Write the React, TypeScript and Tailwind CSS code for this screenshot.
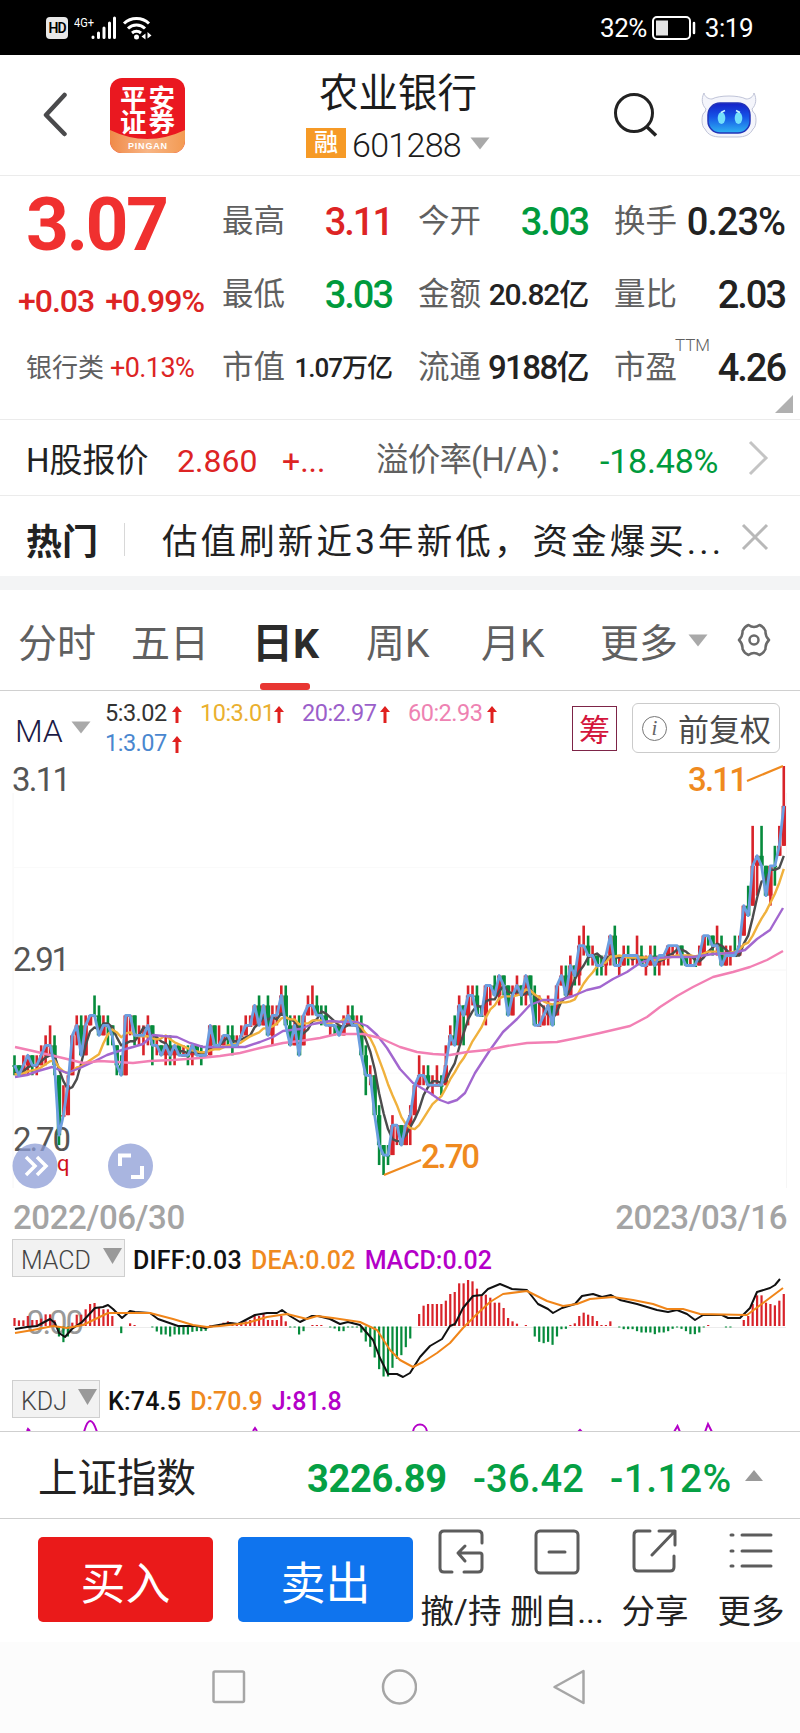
import React from "react";

// [high, low, close] in cents, one entry per trading day
const DAYS: number[][] = [
  [282, 280, 281], [281, 280, 280], [282, 280, 281], [282, 280, 282], [282, 280, 281], [282, 280, 281],
  [283, 281, 282], [284, 281, 283], [285, 282, 283], [284, 280, 281], [280, 273, 274], [279, 276, 276],
  [280, 276, 279], [284, 280, 284], [286, 283, 285], [286, 282, 282], [286, 282, 285], [286, 285, 286],
  [288, 286, 286], [287, 284, 284], [286, 284, 285], [286, 283, 285], [285, 283, 284], [283, 280, 281],
  [282, 280, 280], [286, 280, 286], [286, 284, 286], [286, 283, 284], [285, 283, 284], [285, 282, 284],
  [286, 283, 285], [285, 281, 283], [284, 282, 283], [283, 282, 282], [284, 281, 283], [284, 281, 282],
  [283, 281, 283], [283, 282, 282], [283, 282, 282], [283, 281, 282], [283, 281, 283], [283, 282, 282],
  [283, 281, 282], [282, 282, 282], [285, 282, 285], [285, 283, 283], [285, 283, 283], [284, 283, 284],
  [285, 283, 284], [285, 282, 283], [284, 283, 283], [285, 284, 284], [286, 284, 285], [286, 285, 285],
  [287, 285, 287], [288, 285, 285], [287, 285, 287], [288, 284, 284], [287, 283, 286], [287, 285, 286],
  [289, 286, 288], [289, 285, 285], [286, 283, 283], [286, 283, 285], [286, 282, 282], [286, 283, 286],
  [288, 286, 287], [289, 286, 287], [288, 286, 286], [287, 285, 286], [287, 285, 285], [285, 284, 285],
  [285, 284, 285], [285, 284, 284], [286, 284, 285], [287, 285, 286], [287, 285, 285], [286, 285, 285],
  [286, 282, 282], [283, 278, 280], [281, 279, 280], [280, 276, 276], [277, 271, 273], [273, 270, 272],
  [273, 271, 272], [276, 272, 275], [275, 273, 275], [275, 273, 273], [275, 273, 275], [277, 273, 276],
  [279, 276, 279], [282, 279, 280], [281, 279, 280], [281, 279, 279], [280, 278, 279], [281, 279, 279],
  [280, 278, 279], [283, 279, 281], [285, 283, 284], [286, 283, 283], [288, 283, 287], [287, 283, 286],
  [289, 285, 288], [289, 287, 288], [289, 286, 286], [287, 286, 286], [289, 285, 289], [289, 287, 289],
  [290, 288, 288], [290, 287, 290], [290, 288, 289], [289, 286, 286], [289, 286, 288], [290, 288, 289],
  [289, 287, 288], [290, 287, 290], [290, 288, 288], [289, 285, 285], [288, 285, 285], [287, 285, 286],
  [288, 285, 287], [287, 285, 285], [289, 286, 289], [291, 289, 290], [291, 288, 288], [292, 288, 291],
  [291, 289, 290], [294, 289, 293], [295, 292, 293], [294, 291, 292], [293, 291, 292], [292, 290, 291],
  [292, 290, 291], [292, 290, 292], [294, 291, 294], [295, 291, 291], [292, 290, 291], [293, 291, 292],
  [293, 291, 292], [292, 291, 292], [294, 291, 292], [293, 291, 291], [292, 290, 291], [293, 291, 292],
  [293, 290, 291], [292, 290, 292], [292, 291, 292], [293, 291, 293], [293, 292, 293], [293, 292, 293],
  [293, 291, 292], [292, 291, 291], [292, 291, 291], [292, 291, 291], [293, 291, 292], [294, 292, 294],
  [294, 293, 294], [294, 292, 293], [295, 292, 293], [294, 292, 291], [293, 291, 292], [293, 291, 292],
  [294, 292, 292], [294, 292, 293], [297, 294, 297], [299, 296, 296], [305, 297, 301], [302, 298, 302],
  [305, 301, 301], [301, 298, 298], [301, 297, 301], [303, 299, 301], [305, 302, 303], [311, 303, 307],
];

const MACD = [
  24, 17, 17, 30, 18, 18, 22, 35, 35, 17, -30, -47, -30, 10, 34, 34, 50, 66, 69, 55, 50, 50, 30, 0, -20, 0, 8, 3, 0,
  0, 0, -3, -15, -24, -24, -30, -24, -24, -24, -24, -16, -14, -14, -13, 2, 2, 4, 10, 14, 10, 8, 10, 14, 18, 34, 30,
  36, 18, 18, 18, 30, 14, -3, -3, -24, -14, 0, 3, 3, 3, 0, -3, -6, -14, -14, -3, -3, -3, -18, -45, -61, -93, -128,
  -150, -150, -124, -97, -86, -62, -36, 0, 36, 61, 66, 66, 66, 66, 76, 96, 102, 128, 128, 138, 134, 112, 92, 94, 85,
  70, 70, 54, 24, 14, 7, 0, 3, 0, -30, -46, -50, -46, -55, -30, -8, -7, 3, 8, 30, 40, 34, 30, 15, 3, 3, 14, 0, -3,
  -8, -8, -8, -14, -18, -18, -18, -23, -18, -18, -14, -7, -3, -7, -14, -23, -23, -18, -3, 3, 0, 0, 0, -3, -3, 0, 0,
  18, 30, 66, 92, 92, 70, 66, 62, 76, 96,
];

const MA20 =
  "15,1077 27,1075 38,1071 52,1067 67,1073 80,1068 93,1062 107,1055 122,1050 133,1047 143,1044 153,1035 163,1036 177,1037 190,1043 203,1047 217,1047 230,1047 245,1047 260,1042 273,1037 283,1031 300,1029 313,1024 330,1021 343,1022 357,1022 367,1026 377,1035 387,1048 400,1069 413,1083 430,1093 440,1100 448,1103 457,1100 465,1093 475,1073 490,1050 503,1032 517,1019 530,1005 543,1000 560,1000 573,996 587,990 600,987 613,979 627,972 640,963 653,958 673,957 693,957 713,954 733,953 745,950 757,939 770,930 783,908";
const MA60 =
  "15,1047 33,1051 50,1055 67,1059 83,1063 100,1061 117,1062 133,1063 150,1061 173,1060 200,1058 220,1056 240,1053 260,1048 283,1043 300,1041 320,1038 337,1034 363,1034 380,1038 400,1047 417,1052 433,1054 450,1055 467,1052 487,1050 507,1046 527,1043 557,1042 577,1038 600,1033 630,1026 647,1017 660,1007 677,996 693,987 713,977 733,972 750,967 767,960 783,951";
const DIFF =
  "15,1329 27,1327 37,1326 50,1319 55,1323 59,1333 65,1337 72,1329 82,1322 95,1308 103,1307 108,1305 113,1309 122,1318 130,1311 135,1312 150,1313 158,1319 178,1326 197,1326 205,1328 213,1326 230,1323 238,1324 255,1315 267,1313 277,1313 282,1310 290,1316 300,1322 312,1316 318,1316 330,1319 340,1324 348,1322 360,1325 373,1340 380,1358 388,1374 397,1374 403,1377 410,1373 420,1357 430,1346 442,1339 450,1326 455,1324 463,1308 473,1296 482,1295 488,1289 500,1284 512,1289 527,1290 538,1304 548,1309 553,1313 562,1308 575,1304 582,1296 593,1294 602,1297 611,1295 620,1300 637,1304 657,1310 668,1312 677,1310 687,1314 695,1320 703,1315 722,1315 728,1318 740,1318 750,1308 757,1292 770,1288 775,1285 780,1279";
const DEA =
  "15,1333 33,1330 53,1326 67,1328 83,1325 108,1313 150,1313 173,1319 193,1325 207,1327 220,1326 247,1323 267,1317 287,1314 307,1319 317,1316 333,1318 360,1322 377,1330 390,1350 400,1360 413,1367 423,1362 437,1353 450,1343 463,1328 477,1314 490,1302 503,1294 527,1291 547,1301 563,1306 577,1304 590,1299 613,1297 633,1300 653,1304 667,1309 683,1309 700,1314 747,1315 763,1303 783,1288";

const RED = "#d8232a";
const GREEN = "#068b3c";

const dayX = (i: number) => 14.5 + i * 4.4467;
const priceY = (p: number) => 766 + (311 - p) * 9.976;

function average(n: number) {
  return DAYS.map((_, i) => {
    let sum = 0;
    for (let k = i - n + 1; k <= i; k++) sum += k < 0 ? 280 : DAYS[k][2];
    return `${dayX(i).toFixed(1)},${priceY(sum / n).toFixed(1)}`;
  }).join(" ");
}

function Candles() {
  return (
    <g>
      {DAYS.map(([high, low, close], i) => {
        const prev = i ? DAYS[i - 1][2] : 281;
        const up = close > prev || (close === prev && i % 3 !== 0);
        const open = Math.min(high, Math.max(low, prev));
        const top = priceY(Math.max(open, close));
        const color = up ? RED : GREEN;
        return (
          <g key={i} fill={color}>
            <rect x={dayX(i) - 1.3} y={priceY(high)} width="2.6" height={priceY(low) - priceY(high)} />
            <rect x={dayX(i) - 2.2} y={top} width="4.4" height={Math.max(1.5, priceY(Math.min(open, close)) - top)} />
          </g>
        );
      })}
    </g>
  );
}

function PriceChart() {
  return (
    <svg className="block h-[438px] w-full" viewBox="0 757 800 438" fill="none">
      <path d="M13 793V1188M786.500 793V1188M13 970H786" stroke="#f6f6f6" />
      <path d="M13 867.500H786M13 1073H786" stroke="#fafafa" />
      <g fill="#555" fontSize="33" fontFamily="Roboto, sans-serif">
        <text x="12" y="791" textLength="59">3.11</text>
        <text x="13" y="971" textLength="57">2.91</text>
        <text x="13" y="1151" textLength="58">2.70</text>
      </g>
      <Candles />
      <g strokeWidth="2.4" strokeLinejoin="round">
        <polyline points={average(5)} stroke="#4c4c4c" />
        <polyline points={average(10)} stroke="#f0b13c" />
        <polyline points={MA20} stroke="#a267cf" />
        <polyline points={MA60} stroke="#f280b4" />
        <polyline points={average(1)} stroke="#6c9ee0" strokeWidth="2.800" />
      </g>
      <g fill="#ef8a1f" fontSize="33" fontWeight="500" fontFamily="Roboto, sans-serif">
        <text x="688" y="791" textLength="60">3.11</text>
        <text x="421" y="1168" textLength="59">2.70</text>
      </g>
      <path d="M747 781L783 766M384 1175L421 1160" stroke="#ef8a1f" strokeWidth="2.200" />
      <circle cx="35" cy="1166" r="22.500" fill="#8c9cd6" fillOpacity=".75" />
      <path d="M26 1157L35 1166L26 1175M37 1157L46 1166L37 1175" stroke="#fff" strokeWidth="3.500" />
      <text x="57" y="1171" fill="#d0111b" fontSize="22" fontFamily="Roboto, sans-serif">q</text>
      <circle cx="130.500" cy="1166" r="22.500" fill="#a9b5e0" />
      <path d="M120 1166V1155.500H131M142 1166V1177H131" stroke="#fff" strokeWidth="4" />
    </svg>
  );
}

function MacdChart() {
  return (
    <svg className="block h-[103px] w-full" viewBox="0 1277 800 103" fill="none">
      <path d="M13 1327.500H786" stroke="#ececec" />
      <text x="26" y="1334" fill="#999" fontSize="33" fontFamily="Roboto, sans-serif" textLength="58">0.00</text>
      {MACD.map((v, i) =>
        v === 0 ? null : (
          <rect
            key={i}
            x={dayX(i) - 1.1}
            y={v > 0 ? 1326 - v / 3 : 1326.5}
            width="2.2"
            height={Math.abs(v) / 3}
            fill={v > 0 ? RED : GREEN}
          />
        )
      )}
      <polyline points={DIFF} stroke="#111" strokeWidth="2" strokeLinejoin="round" />
      <polyline points={DEA} stroke="#f08519" strokeWidth="2" strokeLinejoin="round" />
    </svg>
  );
}

function StatusBar() {
  return (
    <div className="flex h-[55px] shrink-0 items-center justify-between bg-black pr-[47px] pl-[46px] text-white">
      <div className="flex h-6 items-center">
        <div className="flex h-[22px] w-[22px] items-center justify-center rounded-[4px] bg-[#e8e8e8] text-[14px] leading-none font-semibold tracking-[-1px] text-black">
          HD
        </div>
        <svg className="ml-[6px] block" width="78" height="26" viewBox="0 0 78 26" fill="none">
          <text x="0" y="12" fill="#fff" fontSize="13.500" fontFamily="Roboto, sans-serif" textLength="20" lengthAdjust="spacingAndGlyphs">4G+</text>
          <path d="M19 22.500V22M24.500 22.500V18M30 22.500V13M35.500 22.500V8M40.500 22.500V3" stroke="#fff" strokeWidth="3" strokeLinecap="round" />
          <path d="M50 8.500a18 18 0 0 1 25 0M54 13.500a12 12 0 0 1 17 0M58 18a7 7 0 0 1 9 0" stroke="#fff" strokeWidth="3" />
          <circle cx="62.500" cy="22" r="2.500" fill="#fff" />
          <path d="M67.500 21.500L71.500 18.500V24.500ZM77.500 20.500L73.500 17V23.500Z" fill="#fff" />
        </svg>
      </div>
      <div className="flex items-center text-[26px] leading-none tracking-[-0.5px]">
        <span>32%</span>
        <svg className="mx-[4px] block" width="46" height="26" viewBox="0 0 46 26" fill="none">
          <rect x="2" y="2" width="37" height="22" rx="4" stroke="#fff" strokeWidth="2" />
          <rect x="5" y="5.500" width="12" height="15" fill="#e4e4e4" />
          <path d="M43 8V18" stroke="#fff" strokeWidth="2.500" strokeLinecap="round" />
        </svg>
        <span className="ml-[4px]">3:19</span>
      </div>
    </div>
  );
}

function Caret({ className = "", fill = "#a9a9a9" }: { className?: string; fill?: string }) {
  return (
    <svg className={`block shrink-0 ${className}`} width="20" height="13" viewBox="0 0 20 13">
      <path d="M0.500 0.500H19.500L10 12.500Z" fill={fill} />
    </svg>
  );
}

function BrokerLogo() {
  return (
    <svg className="block" width="75" height="75" viewBox="0 0 75 75">
      <defs>
        <clipPath id="logoShape">
          <rect width="75" height="75" rx="12" />
        </clipPath>
        <linearGradient id="logoBand" x1="0" y1="0" x2="1" y2="0">
          <stop offset="0" stopColor="#f08a48" />
          <stop offset=".5" stopColor="#f8b585" />
          <stop offset="1" stopColor="#f39a52" />
        </linearGradient>
      </defs>
      <g clipPath="url(#logoShape)">
        <rect width="75" height="75" fill="#ea1820" />
        <path d="M0 52Q37 70 75 52V75H0Z" fill="url(#logoBand)" />
      </g>
      <g fill="#fff" textAnchor="middle">
        <text x="37.500" y="30" fontSize="26.500" fontWeight="700" fontFamily="'Noto Sans CJK SC', sans-serif" textLength="55">平安</text>
        <text x="37.500" y="54" fontSize="26.500" fontWeight="700" fontFamily="'Noto Sans CJK SC', sans-serif" textLength="55">证券</text>
        <text x="37.500" y="71" fontSize="9" fontWeight="700" fontFamily="'Liberation Sans', sans-serif" textLength="39">PINGAN</text>
      </g>
    </svg>
  );
}

function Robot() {
  return (
    <svg className="block" width="56" height="46" viewBox="0 0 56 46">
      <defs>
        <linearGradient id="visor" x1="0" y1="0" x2="0" y2="1">
          <stop offset="0" stopColor="#1420c8" />
          <stop offset=".45" stopColor="#1553e6" />
          <stop offset="1" stopColor="#2fb4f2" />
        </linearGradient>
      </defs>
      <path
        d="M3 1C0 7 1 13 5 17L4 20C0 21 0 35 4 37C7 43 12 45 20 45H36C44 45 49 43 52 37C56 35 56 21 52 20L51 17C55 13 56 7 53 1C52 5 49 7 45 7C38 3 18 3 11 7C7 7 4 5 3 1Z"
        fill="#f4f5fb"
        stroke="#c0c4d8"
      />
      <rect x="7" y="11" width="42" height="30" rx="12" fill="url(#visor)" stroke="#2233b8" strokeWidth="1.500" />
      <ellipse cx="20.500" cy="26" rx="3.800" ry="6" fill="#74e0fb" />
      <ellipse cx="37.500" cy="26" rx="3.800" ry="6" fill="#74e0fb" />
      <path d="M20 20.500L24 18.500M35 18.500L39 20.500" stroke="#c8f3ff" strokeWidth="1.500" />
    </svg>
  );
}

function Header() {
  return (
    <div className="flex h-[121px] shrink-0 items-center border-b border-[#ebebeb] pl-[43px] text-[#1c1c1c]">
      <svg className="block" width="26" height="46" viewBox="0 0 26 46" fill="none">
        <path d="M21.500 3L3 23L21.500 42" stroke="#4a4a4c" strokeWidth="4.500" strokeLinecap="round" strokeLinejoin="round" />
      </svg>
      <div className="ml-[41px]">
        <BrokerLogo />
      </div>
      <div className="ml-[98px] flex w-[230px] flex-col items-center pt-[10px]">
        <div className="text-[39.5px] leading-[46px]">农业银行</div>
        <div className="flex h-[52px] items-center">
          <div className="flex h-[30px] w-[40px] items-center justify-center bg-[#f69a26] pb-px text-[24px] leading-none font-medium text-white">融</div>
          <span className="mt-[4px] ml-[6px] text-[34px] leading-none font-light tracking-[-0.7px]">601288</span>
          <Caret className="ml-[9px]" />
        </div>
      </div>
      <svg className="ml-[100px] block" width="46" height="46" viewBox="0 0 46 46" fill="none">
        <circle cx="21" cy="21" r="18.500" stroke="#222" strokeWidth="3" />
        <path d="M33 34L43 43.500" stroke="#222" strokeWidth="3.500" />
      </svg>
      <div className="ml-[42px]">
        <Robot />
      </div>
    </div>
  );
}

function Stat({ label, value, className }: { label: React.ReactNode; value: string; className: string }) {
  return (
    <div className="flex h-[73px] items-center justify-between leading-none whitespace-nowrap">
      <span className="relative text-[31.5px] text-[#606060]">{label}</span>
      <span className={`font-medium ${className}`}>{value}</span>
    </div>
  );
}

function Quote() {
  return (
    <div className="relative flex h-[244px] shrink-0 border-b border-[#ebebeb] pt-[9px] whitespace-nowrap">
      <div className="flex w-[222px] flex-col">
        <div className="flex h-[78px] items-center pl-[26px] text-[75px] leading-none font-bold tracking-[-2.6px] text-[#f0302f]">3.07</div>
        <div className="flex h-[76px] items-center gap-[11px] pl-[18px] text-[32px] leading-none font-medium tracking-[-1px] text-[#dd2424]">
          <span>+0.03</span>
          <span>+0.99%</span>
        </div>
        <div className="flex h-[58px] items-center gap-[6px] pl-[26px] leading-none">
          <span className="text-[26px] text-[#606060]">银行类</span>
          <span className="text-[27px] tracking-[-0.6px] text-[#dd2424]">+0.13%</span>
        </div>
      </div>
      <div className="grid h-[219px] grid-cols-[170px_170px_171px] gap-x-[26px]">
        <Stat label="最高" value="3.11" className="text-[38px] tracking-[-2px] text-[#dd2424]" />
        <Stat label="今开" value="3.03" className="text-[38px] tracking-[-2px] text-[#009a3c]" />
        <Stat label="换手" value="0.23%" className="text-[38px] tracking-[-1px] text-[#222]" />
        <Stat label="最低" value="3.03" className="text-[38px] tracking-[-2px] text-[#009a3c]" />
        <Stat label="金额" value="20.82亿" className="text-[30px] tracking-[-1.2px] text-[#222]" />
        <Stat label="量比" value="2.03" className="text-[38px] tracking-[-2px] text-[#222]" />
        <Stat label="市值" value="1.07万亿" className="text-[26px] tracking-[-1px] text-[#222]" />
        <Stat label="流通" value="9188亿" className="text-[33px] tracking-[-1.6px] text-[#222]" />
        <Stat
          label={
            <>
              市盈
              <span className="absolute top-[-15px] left-[61px] text-[17px] font-light">TTM</span>
            </>
          }
          value="4.26"
          className="text-[38px] tracking-[-2px] text-[#222]"
        />
      </div>
      <svg className="absolute right-[7px] bottom-[6px] block" width="18" height="18" viewBox="0 0 18 18">
        <path d="M18 0V18H0Z" fill="#b0b0b0" />
      </svg>
    </div>
  );
}

function HShareRow() {
  return (
    <div className="flex h-[76px] shrink-0 items-center border-b border-[#ebebeb] pl-[26px] leading-none whitespace-nowrap">
      <span className="w-[151px] pt-[6px] text-[33px] text-[#222]">H股报价</span>
      <span className="w-[105px] pt-[6px] text-[32px] text-[#dd2424]">2.860</span>
      <span className="w-[94px] pt-[6px] text-[32px] text-[#dd2424]">+...</span>
      <span className="w-[224px] pt-[6px] text-[32.5px] tracking-[-0.8px] text-[#606060]">溢价率(H/A)：</span>
      <span className="w-[146px] pt-[6px] text-[34px] tracking-[-0.2px] text-[#009a3c]">-18.48%</span>
      <svg className="block" width="24" height="36" viewBox="0 0 24 36" fill="none">
        <path d="M4 2L20 18L4 34" stroke="#c4c4c4" strokeWidth="3" />
      </svg>
    </div>
  );
}

function NewsRow() {
  return (
    <div className="flex h-[94px] shrink-0 border-b-[14px] border-[#f3f4f5] pl-[26px] leading-none whitespace-nowrap text-[#222]">
      <div className="flex w-[98px] items-center pt-[14px] text-[36px] font-bold">热门</div>
      <div className="mt-[27px] h-[33px] w-px bg-[#d8d8d8]" />
      <div className="flex w-[615px] shrink-0 items-center pt-[14px] pl-[37px] text-[35.5px] tracking-[3.1px]">
        估值刷新近3年新低，资金爆买...
      </div>
      <svg className="mt-[27px] ml-px block shrink-0" width="28" height="28" viewBox="0 0 28 28" fill="none">
        <path d="M2 2L26 26M26 2L2 26" stroke="#b8b8b8" strokeWidth="3" />
      </svg>
    </div>
  );
}

function PeriodTabs() {
  return (
    <div className="flex h-[101px] shrink-0 items-center border-b border-[#d0d0d0] pt-[8px] pl-[18px] text-[39px] leading-none whitespace-nowrap text-[#606060]">
      <span className="w-[113px]">分时</span>
      <span className="w-[121px]">五日</span>
      <div className="relative flex h-full w-[114px] items-center text-[41px] font-bold text-[#2b2b2b]">
        日K
        <div className="absolute bottom-0 left-[8px] h-[7px] w-[50px] rounded-[3px] bg-[#e83632]" />
      </div>
      <span className="w-[115px]">周K</span>
      <span className="w-[119px]">月K</span>
      <span className="w-[88px]">更多</span>
      <Caret className="-mt-2" />
      <svg className="-mt-2 ml-[29px] block" width="34" height="34" viewBox="0 0 34 34" fill="none" stroke="#6a6a6a" strokeWidth="2.500" strokeLinejoin="round">
        <path d="M11.500 2Q17 6 22.500 2Q26.500 3.500 28.500 8Q28 13 32 17Q28 21 28.500 26Q26.500 30.500 22.500 32Q17 28 11.500 32Q7.500 30.500 5.500 26Q6 21 2 17Q6 13 5.500 8Q7.500 3.500 11.500 2Z" />
        <circle cx="17" cy="17" r="4.500" />
      </svg>
    </div>
  );
}

function UpArrow() {
  return (
    <svg className="block shrink-0" width="10" height="17" viewBox="0 0 10 17">
      <path d="M5 0L10 6H6.500V17H3.500V6H0Z" fill="#e0201f" />
    </svg>
  );
}

function MaItem({ text, className }: { text: string; className: string }) {
  return (
    <div className={`flex items-center ${className}`}>
      <span className="flex-1">{text}</span>
      <UpArrow />
    </div>
  );
}

function MaHeader() {
  return (
    <div className="flex h-[66px] shrink-0 leading-none whitespace-nowrap">
      <div className="flex w-[105px] items-center pt-[14px] pl-[15px] text-[32px] font-light text-[#1c1a45]">
        MA
        <Caret className="-mt-2 ml-[8px]" />
      </div>
      <div className="w-[467px] pt-[8px] text-[23.5px] tracking-[-0.5px]">
        <div className="flex h-[30px]">
          <MaItem text="5:3.02" className="w-[77px] text-[#333]" />
          <MaItem text="10:3.01" className="ml-[18px] w-[84px] text-[#eab02f]" />
          <MaItem text="20:2.97" className="ml-[18px] w-[88px] text-[#9b5fca]" />
          <MaItem text="60:2.93" className="ml-[18px] w-[89px] text-[#ee82b2]" />
        </div>
        <MaItem text="1:3.07" className="h-[30px] w-[77px] text-[#4a87cf]" />
      </div>
      <div className="mt-[15px] flex h-[45px] w-[45px] items-center justify-center border border-[#7d2447] pt-[3px] text-[31px] text-[#d4163c]">筹</div>
      <div className="mt-[12px] ml-[15px] flex h-[50px] w-[148px] items-center rounded-[6px] border border-[#cbcbcb] pl-[9px] text-[31px] text-[#4a4a4a]">
        <div className="mr-[11px] flex h-[25px] w-[25px] shrink-0 items-center justify-center rounded-full border-[1.5px] border-[#777] font-['Liberation_Serif'] text-[21px] text-[#666] italic">
          i
        </div>
        <span className="pt-[5px]">前复权</span>
      </div>
    </div>
  );
}

function Indicator({ name, width, items }: { name: string; width: string; items: [string, string][] }) {
  return (
    <div className="flex h-[38px] shrink-0 items-center pl-[12px] text-[25px] leading-none font-medium whitespace-nowrap">
      <div className={`mr-[8px] flex h-[38px] items-center justify-between border border-[#cfcfcf] bg-[#f2f2f2] pt-[4px] pr-[2px] pl-[8px] font-light text-[#444] ${width}`}>
        {name}
        <svg className="-mt-2 block" width="19" height="16" viewBox="0 0 19 16">
          <path d="M0 0H19L9.500 16Z" fill="#999" />
        </svg>
      </div>
      <div className="flex gap-[9px] pt-[4px]">
        {items.map(([text, color]) => (
          <span key={text} className={color}>
            {text}
          </span>
        ))}
      </div>
    </div>
  );
}

function ChartPanel() {
  return (
    <div className="flex h-[740px] shrink-0 flex-col overflow-hidden">
      <MaHeader />
      <PriceChart />
      <div className="flex h-[44px] shrink-0 items-center justify-between pr-[13px] pl-[13px] text-[33px] leading-none font-medium tracking-[-0.4px] text-[#a4a4a4]">
        <span>2022/06/30</span>
        <span>2023/03/16</span>
      </div>
      <Indicator
        name="MACD"
        width="w-[113px]"
        items={[
          ["DIFF:0.03", "text-[#111] tracking-[0.2px]"],
          ["DEA:0.02", "text-[#ef8a1f] tracking-[0.2px]"],
          ["MACD:0.02", "text-[#b400c8]"],
        ]}
      />
      <MacdChart />
      <Indicator
        name="KDJ"
        width="w-[88px]"
        items={[
          ["K:74.5", "text-[#111] tracking-[0.2px]"],
          ["D:70.9", "text-[#ef8a1f]"],
          ["J:81.8", "text-[#b400c8]"],
        ]}
      />
      <svg className="block h-[13px] w-full shrink-0" viewBox="0 1418 800 13" fill="none">
        <path
          d="M84 1432Q90 1410 97 1432M27 1431L28 1429L30 1431M253 1431L255 1428L257 1431M413 1432C414 1422 426 1422 427 1432M578 1432L580 1430L582 1432M674 1432L677.500 1426L680 1432M705 1432L708 1424L712 1432"
          stroke="#b400c8"
          strokeWidth="2"
        />
      </svg>
    </div>
  );
}

function IndexBar() {
  return (
    <div className="flex h-[88px] shrink-0 items-center border-y border-[#cfcfcf] pt-[8px] pl-[38px] leading-none whitespace-nowrap">
      <span className="w-[269px] text-[39.5px] text-[#222]">上证指数</span>
      <span className="w-[166px] text-[38px] font-bold tracking-[-0.3px] text-[#05a044]">3226.89</span>
      <span className="w-[137px] text-[38px] font-medium tracking-[0.2px] text-[#05a044]">-36.42</span>
      <span className="w-[135px] text-[39px] font-medium tracking-[0.4px] text-[#05a044]">-1.12%</span>
      <svg className="-mt-2 block" width="18" height="11" viewBox="0 0 18 11">
        <path d="M9 0L18 11H0Z" fill="#999" />
      </svg>
    </div>
  );
}

function Action({ label, className, children }: { label: string; className: string; children: React.ReactNode }) {
  return (
    <div className={`flex shrink-0 flex-col items-center ${className}`}>
      <svg className="block h-[46px] w-[46px]" viewBox="0 0 46 46" fill="none" stroke="#5c5c5c" strokeWidth="3" strokeLinecap="round" strokeLinejoin="round">
        {children}
      </svg>
      <span className="mt-[18px] text-[33.5px] leading-[38px] whitespace-nowrap text-[#222]">{label}</span>
    </div>
  );
}

function ActionBar() {
  return (
    <div className="flex h-[123px] shrink-0 pl-[38px]">
      <div className="mt-[18px] flex h-[85px] w-[175px] items-center justify-center rounded-[5px] bg-[#ea1a1a] pt-[10px] text-[45px] leading-none text-white">买入</div>
      <div className="mt-[18px] ml-[25px] flex h-[85px] w-[175px] items-center justify-center rounded-[5px] bg-[#0f74ee] pt-[10px] text-[45px] leading-none text-white">卖出</div>
      <div className="flex pt-[10px] pl-[6px]">
        <Action label="撤/持" className="w-[84px]">
          <path d="M14 43H6Q2 43 2 39V6Q2 2 6 2H40Q44 2 44 6V14M26 43H40Q44 43 44 39V26Q44 24 42 24H20M27 17L20 24L27 32" />
        </Action>
        <Action label="删自..." className="ml-[5px] w-[98px]">
          <rect x="2" y="2" width="42" height="42" rx="4" />
          <path d="M15 23H31" />
        </Action>
        <Action label="分享" className="ml-[12px] w-[74px]">
          <path d="M18 2H6Q2 2 2 6V38Q2 42 6 42H38Q42 42 42 38V27M27 2H43V16M43 2L20 26" />
        </Action>
        <Action label="更多" className="ml-[20px] w-[78px]">
          <path d="M14 6H43M14 22H43M14 37H43M3 6H5M3 22H5M3 37H5" />
        </Action>
      </div>
    </div>
  );
}

function NavBar() {
  return (
    <div className="flex flex-1 items-center justify-between bg-[#fcfcfc] pr-[214px] pb-[2px] pl-[212px]">
      <svg className="block" width="34" height="34" viewBox="0 0 34 34" fill="none" stroke="#a6a6a6" strokeWidth="2.500">
        <rect x="1.500" y="1.500" width="30.500" height="30.500" rx="1.500" />
      </svg>
      <svg className="block" width="36" height="36" viewBox="0 0 36 36" fill="none" stroke="#a6a6a6" strokeWidth="2.500">
        <circle cx="18.500" cy="18" r="16.500" />
      </svg>
      <svg className="block" width="34" height="36" viewBox="0 0 34 36" fill="none" stroke="#a6a6a6" strokeWidth="2.500" strokeLinejoin="round">
        <path d="M31.500 2V34L2.500 18Z" />
      </svg>
    </div>
  );
}

export default function App() {
  return (
    <div className="flex h-[1733px] w-[800px] flex-col overflow-hidden bg-white font-[Roboto,'Noto_Sans_CJK_SC',sans-serif] [font-kerning:none]">
      <StatusBar />
      <Header />
      <Quote />
      <HShareRow />
      <NewsRow />
      <PeriodTabs />
      <ChartPanel />
      <IndexBar />
      <ActionBar />
      <NavBar />
    </div>
  );
}
